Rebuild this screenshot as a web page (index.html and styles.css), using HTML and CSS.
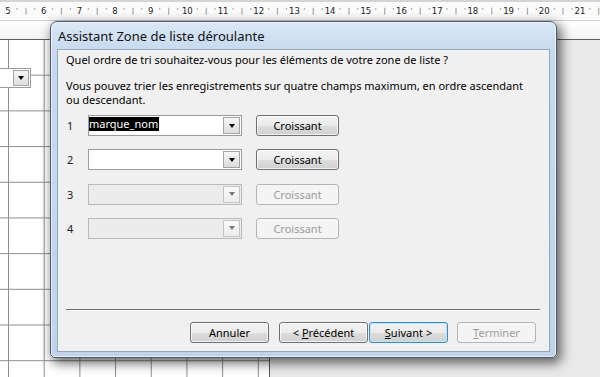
FILE: index.html
```html
<!DOCTYPE html>
<html lang="fr">
<head>
    <meta charset="UTF-8">
    <title>Assistant Zone de liste déroulante</title>
    <link rel="stylesheet" href="styles.css">
</head>
<body>
    <div class="ruler">
        <span class="unit"><b>5</b><i>'</i><i>|</i><i>'</i></span>
        <span class="unit"><b>6</b><i>'</i><i>|</i><i>'</i></span>
        <span class="unit"><b>7</b><i>'</i><i>|</i><i>'</i></span>
        <span class="unit"><b>8</b><i>'</i><i>|</i><i>'</i></span>
        <span class="unit"><b>9</b><i>'</i><i>|</i><i>'</i></span>
        <span class="unit"><b>10</b><i>'</i><i>|</i><i>'</i></span>
        <span class="unit"><b>11</b><i>'</i><i>|</i><i>'</i></span>
        <span class="unit"><b>12</b><i>'</i><i>|</i><i>'</i></span>
        <span class="unit"><b>13</b><i>'</i><i>|</i><i>'</i></span>
        <span class="unit"><b>14</b><i>'</i><i>|</i><i>'</i></span>
        <span class="unit"><b>15</b><i>'</i><i>|</i><i>'</i></span>
        <span class="unit"><b>16</b><i>'</i><i>|</i><i>'</i></span>
        <span class="unit"><b>17</b><i>'</i><i>|</i><i>'</i></span>
        <span class="unit"><b>18</b><i>'</i><i>|</i><i>'</i></span>
        <span class="unit"><b>19</b><i>'</i><i>|</i><i>'</i></span>
        <span class="unit"><b>20</b><i>'</i><i>|</i><i>'</i></span>
        <span class="unit"><b>21</b><i>'</i><i>|</i></span>
    </div>
    <div class="band"></div>

    <div class="designer">
        <div class="grid">
            <!-- combo control sitting on the form canvas -->
            <div class="form-combo"><span class="form-combo-drop"><span class="arrow"></span></span></div>
        </div>
        <div class="outside"></div>
    </div>

    <div class="dialog">
        <div class="titlebar">Assistant Zone de liste déroulante</div>
        <div class="client">
            <p class="question">Quel ordre de tri souhaitez-vous pour les éléments de votre zone de liste ?</p>
            <p class="info">Vous pouvez trier les enregistrements sur quatre champs maximum, en ordre ascendant<br>ou descendant.</p>

            <div class="sort-rows">
                <div class="sort-row">
                    <span class="num">1</span>
                    <div class="combo">
                        <span class="value"><span class="selected">marque_nom</span></span>
                        <span class="drop"><span class="arrow"></span></span>
                    </div>
                    <button class="btn">Croissant</button>
                </div>
                <div class="sort-row">
                    <span class="num">2</span>
                    <div class="combo">
                        <span class="value"></span>
                        <span class="drop"><span class="arrow"></span></span>
                    </div>
                    <button class="btn">Croissant</button>
                </div>
                <div class="sort-row disabled">
                    <span class="num">3</span>
                    <div class="combo">
                        <span class="value"></span>
                        <span class="drop"><span class="arrow"></span></span>
                    </div>
                    <button class="btn" disabled>Croissant</button>
                </div>
                <div class="sort-row disabled">
                    <span class="num">4</span>
                    <div class="combo">
                        <span class="value"></span>
                        <span class="drop"><span class="arrow"></span></span>
                    </div>
                    <button class="btn" disabled>Croissant</button>
                </div>
            </div>

            <div class="separator"></div>

            <div class="footer">
                <button class="btn btn-cancel">Annuler</button>
                <button class="btn btn-prev">&lt; <u>P</u>récédent</button>
                <button class="btn btn-next default"><u>S</u>uivant &gt;</button>
                <button class="btn btn-finish" disabled><u>T</u>erminer</button>
            </div>
        </div>
    </div>
</body>
</html>
```

FILE: styles.css
```css
* {
    margin: 0;
    padding: 0;
    box-sizing: border-box;
}

body {
    width: 600px;
    height: 377px;
    overflow: hidden;
    position: relative;
    background: #e9e9e9;
    font-family: 'Noto Sans', 'Open Sans', sans-serif;
    font-size: 11px;
    color: #000;
}

/* ---------- ruler ---------- */
.ruler {
    height: 21px;
    display: flex;
    padding-left: 3.5px;
    background: #fbfbfb;
    border-top: 2px solid #d4d4d4;
    border-bottom: 1px solid #d0d0d0;
    font-family: 'DejaVu Sans', sans-serif;
    font-size: 8.5px;
    line-height: 19px;
    color: #222;
    white-space: nowrap;
    overflow: hidden;
}

.unit {
    display: flex;
    flex: 0 0 35.69px;
}

.unit b,
.unit i {
    flex: 0 0 25%;
    text-align: center;
    font-weight: normal;
    font-style: normal;
}

.unit i {
    color: #555;
    font-size: 7px;
}

.band {
    height: 19px;
    background: linear-gradient(#ffffff, #f3f3f3);
    border-bottom: 1px solid #5e5e5e;
}

/* ---------- form design surface ---------- */
.designer {
    display: flex;
    height: 337px;
}

.grid {
    position: relative;
    width: 270px;
    background-color: #fff;
    background-image:
        linear-gradient(to right, #8d8d8d 1px, transparent 1px),
        linear-gradient(to bottom, #8d8d8d 1px, transparent 1px);
    background-size: 35.69px 35.69px;
    background-position: 8px 34.7px;
    border-right: 1px solid #5a5a5a;
}

.outside {
    flex: 1;
    background: #e9e9e9;
}

.form-combo {
    position: absolute;
    left: -4px;
    top: 28px;
    width: 35px;
    height: 20px;
    background: #fff;
    border: 1px solid #9a9a9a;
    display: flex;
    justify-content: flex-end;
}

.form-combo-drop {
    width: 16px;
    margin: 1px;
    border: 1px solid #a5a5a5;
    background: linear-gradient(#f6f6f6, #dedede);
    display: flex;
    align-items: center;
    justify-content: center;
}

/* ---------- dialog window ---------- */
.dialog {
    position: absolute;
    left: 50px;
    top: 21px;
    width: 507px;
    height: 337px;
    border: 1px solid #4d5b69;
    border-radius: 7px 7px 5px 5px;
    padding: 0 6px 5px;
    display: flex;
    flex-direction: column;
    background: linear-gradient(#dbe8f5, #c6d9ee 30px, #bfd4eb);
    box-shadow: inset 0 0 0 1px rgba(255, 255, 255, 0.6),
                3px 4px 12px 1px rgba(0, 0, 0, 0.6);
}

.titlebar {
    height: 27px;
    padding: 6px 0 0 1px;
    font-size: 13px;
    line-height: 16px;
    color: #111;
}

.client {
    flex: 1;
    display: flex;
    flex-direction: column;
    background: #f0f0f0;
    border: 1px solid #93a6bc;
    padding: 3px 9px 0 8px;
}

.question {
    line-height: 14px;
}

.info {
    margin-top: 12px;
    line-height: 14px;
}

/* ---------- sort rows ---------- */
.sort-rows {
    margin-top: 8px;
    display: flex;
    flex-direction: column;
    gap: 13.3px;
}

.sort-row {
    display: flex;
    align-items: center;
    height: 21px;
}

.num {
    width: 22px;
    padding-left: 1px;
    color: #1a1a1a;
}

.combo {
    width: 154px;
    height: 21px;
    display: flex;
    background: #fff;
    border: 1px solid #9b9b9b;
}

.value {
    flex: 1;
    padding: 1px 0 0 0;
    line-height: 14px;
}

.selected {
    display: inline-block;
    background: #000;
    color: #fff;
    padding-right: 1px;
}

.drop {
    width: 17px;
    margin: 1px;
    border: 1px solid #a3a3a3;
    background: linear-gradient(#f7f7f7, #dcdcdc);
    display: flex;
    align-items: center;
    justify-content: center;
}

.arrow {
    width: 0;
    height: 0;
    border-left: 3.5px solid transparent;
    border-right: 3.5px solid transparent;
    border-top: 4px solid #000;
}

.sort-row .btn {
    margin-left: 14px;
    width: 83px;
}

.sort-row.disabled .num {
    color: #222;
}

.sort-row.disabled .combo {
    background: #ececec;
    border-color: #b9b9b9;
}

.sort-row.disabled .drop {
    border-color: #c4c4c4;
    background: linear-gradient(#fafafa, #ececec);
}

.sort-row.disabled .arrow {
    border-top-color: #7a7a7a;
}

/* ---------- buttons ---------- */
.btn {
    height: 21px;
    border: 1px solid #707070;
    border-radius: 3px;
    background: linear-gradient(#f3f3f3 0%, #ebebeb 50%, #dddddd 51%, #d0d0d0 100%);
    box-shadow: inset 0 0 0 1px rgba(255, 255, 255, 0.7);
    font-family: inherit;
    font-size: 11px;
    color: #000;
    text-align: center;
}

.btn:disabled {
    border-color: #b3b6b9;
    background: #f4f4f4;
    box-shadow: none;
    color: #9b9b9b;
}

.btn.default {
    border-color: #3c8bc3;
    box-shadow: inset 0 0 0 1px #bfe4f7;
}

.btn u {
    text-decoration: underline;
    text-underline-offset: 1px;
}

.separator {
    margin-top: 70px;
    height: 1px;
    background: #6b6b6b;
    box-shadow: 0 1px 0 #ffffff;
}

.footer {
    margin-top: 12px;
    display: flex;
    justify-content: flex-end;
    padding-right: 4px;
}

.btn-cancel {
    width: 79px;
}

.btn-prev {
    width: 89px;
    margin-left: 10px;
}

.btn-next {
    width: 79px;
    margin-left: 1px;
}

.btn-finish {
    width: 79px;
    margin-left: 9px;
}
```
